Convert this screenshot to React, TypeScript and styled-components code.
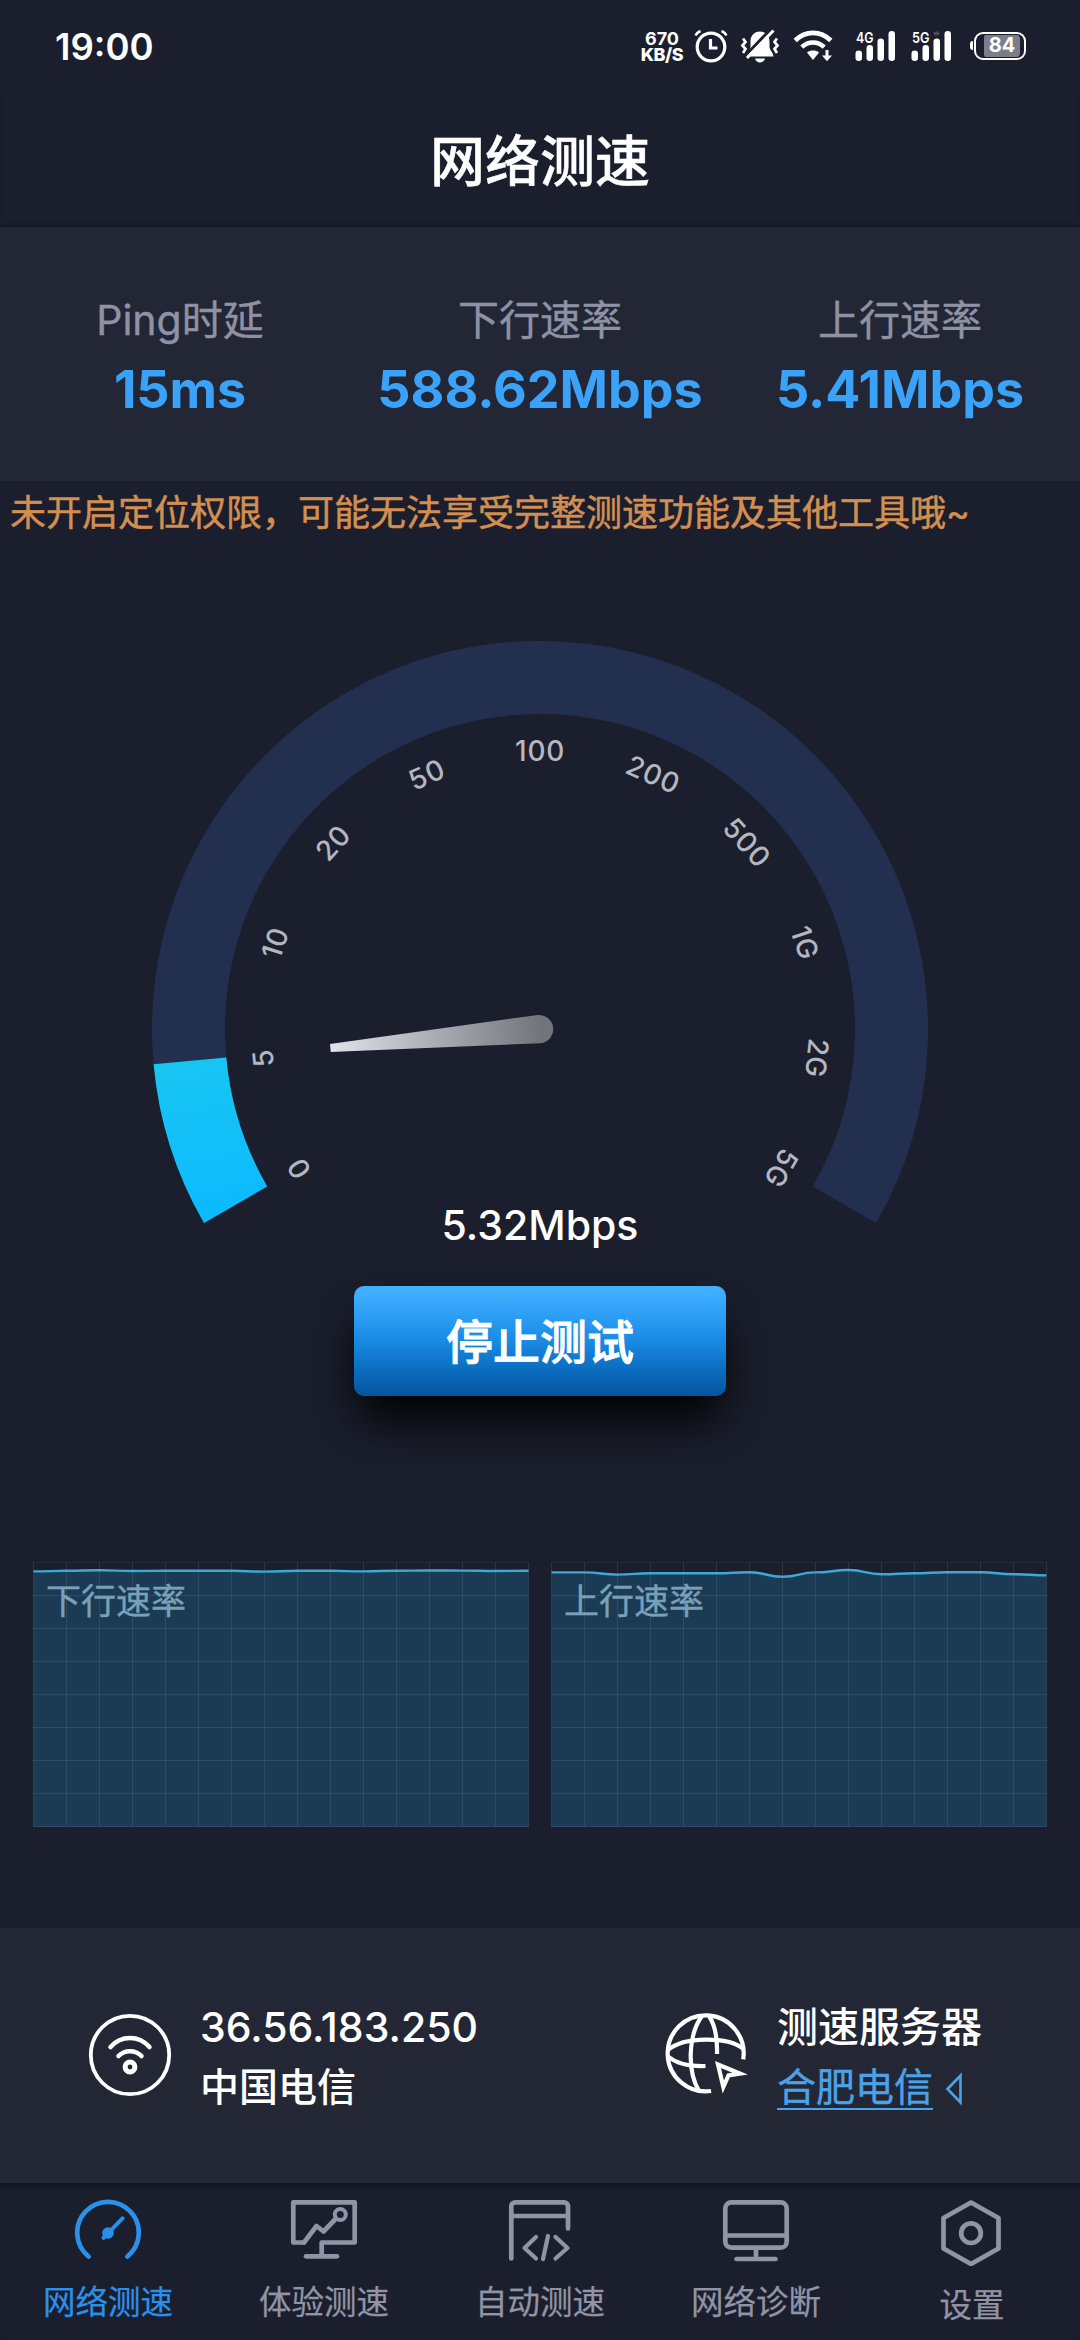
import React from "react";
import styled, { createGlobalStyle } from "styled-components";

const color = {
  bg: "#1b1f2d",
  panel: "#232735",
  muted: "#8f92a4",
  blue: "#3aa3f9",
  tabActive: "#2b90ea",
};

const GlobalStyle = createGlobalStyle`
  * { box-sizing: border-box; }
  body {
    margin: 0;
    background: ${color.bg};
    font-family: Inter, "Noto Sans CJK SC", sans-serif;
    color: #fff;
  }
  svg { display: block; flex: none; }
`;

const Screen = styled.div`
  width: 1080px;
  height: 2340px;
  display: flex;
  flex-direction: column;
  background: ${color.bg};
  overflow: hidden;
`;

/* ---------- status bar ---------- */

const StatusBar = styled.div`
  height: 92px;
  display: flex;
  align-items: center;
  justify-content: space-between;
  padding: 0 54px 0 55px;
`;

const Clock = styled.span`
  font-size: 36.5px;
  font-weight: 600;
  line-height: 44px;
  margin-top: 2px;
`;

const StatusIcons = styled.div`
  display: flex;
  align-items: center;
`;

const NetSpeed = styled.div`
  width: 44px;
  margin-right: 10px;
  font-size: 18px;
  font-weight: 800;
  line-height: 16px;
  letter-spacing: -0.5px;
  text-align: center;
  margin-top: 1px;
`;

const SpeedValue = styled.div`
  font-weight: 650;
  letter-spacing: 0;
`;

const IconSlot = styled.div<{ $gap: number }>`
  margin-right: ${(p) => p.$gap}px;
`;

const Battery = styled.div`
  display: flex;
  align-items: center;
  margin-top: -1px;
`;

const BatteryCap = styled.div`
  width: 3px;
  height: 9px;
  margin-right: 1px;
  border-radius: 3px 0 0 3px;
  background: #fff;
`;

const BatteryBody = styled.div`
  width: 52px;
  height: 28px;
  padding: 1px 4px 1px 8px;
  border: 2.5px solid #fff;
  border-radius: 9px;
`;

const BatteryLevel = styled.div`
  height: 100%;
  border-radius: 2px 4px 4px 2px;
  background: #7b7e8a;
  font-size: 20px;
  font-weight: 700;
  line-height: 21px;
  text-align: center;
`;

/* ---------- header & stats ---------- */

const TitleBar = styled.h1`
  height: 135px;
  margin: 0;
  padding-top: 35px;
  text-align: center;
  font-size: 55px;
  font-weight: 500;
  line-height: 68px;
  -webkit-text-stroke: 0.5px #fff;
  box-shadow: inset 0 -4px 4px -2px rgba(10, 14, 24, 0.45);
`;

const Stats = styled.div`
  height: 254px;
  padding-top: 68px;
  display: grid;
  grid-template-columns: repeat(3, 1fr);
  align-content: start;
  background: ${color.panel};
`;

const Stat = styled.div`
  display: flex;
  flex-direction: column;
  align-items: center;
  gap: 15px;
`;

const StatLabel = styled.div`
  font-size: 41px;
  line-height: 50px;
  color: ${color.muted};
  -webkit-text-stroke: 0.4px ${color.muted};
`;

const StatValue = styled.div`
  font-size: 52px;
  font-weight: 750;
  line-height: 60px;
  color: ${color.blue};
`;

/* ---------- main ---------- */

const Main = styled.main`
  height: 1447px;
  display: flex;
  flex-direction: column;
  align-items: center;
`;

const Notice = styled.div`
  align-self: stretch;
  margin-top: 8px;
  padding-left: 10px;
  font-size: 36px;
  line-height: 49px;
  color: #d38f52;
  -webkit-text-stroke: 0.5px #d38f52;
  white-space: nowrap;
`;

const GaugeSvg = styled.svg`
  margin-top: 103px;
`;

const GaugeText = styled.text`
  font-size: 28px;
  font-weight: 450;
  letter-spacing: 0.7px;
  fill: #b4b6c0;
  text-anchor: middle;
`;

const Reading = styled.div`
  margin-top: -25px;
  font-size: 41px;
  font-weight: 500;
  line-height: 50px;
`;

const StopButton = styled.button`
  width: 372px;
  height: 110px;
  margin-top: 36px;
  padding: 0;
  border: 0;
  border-radius: 10px;
  background: linear-gradient(#44b1ff 0%, #35a6fb 18%, #198ae4 50%, #0b6dbf 76%, #04559d 100%);
  box-shadow: 0 28px 44px -12px rgba(0, 0, 0, 0.95), 0 30px 60px -4px rgba(0, 0, 0, 0.45);
  color: #fff;
  font-family: inherit;
  font-size: 47px;
  font-weight: 500;
  line-height: 112px;
  -webkit-text-stroke: 0.9px #fff;
`;

const Charts = styled.div`
  display: flex;
  gap: 22px;
  margin-top: 165px;
`;

const ChartBox = styled.div`
  display: grid;
  width: 496px;
  height: 268px;
  > * { grid-area: 1 / 1; }
`;

const ChartLabel = styled.div`
  padding: 15px 0 0 13px;
  font-size: 35px;
  line-height: 51px;
  color: #7aa0b9;
  -webkit-text-stroke: 0.4px #7aa0b9;
`;

/* ---------- connection info ---------- */

const InfoPanel = styled.div`
  height: 255px;
  display: grid;
  grid-template-columns: 577px 1fr;
  background: linear-gradient(#232736, #242834);
`;

const InfoItem = styled.div`
  display: flex;
  align-items: flex-start;
  padding: 85px 0 0 88px;
`;

const InfoText = styled.div`
  margin: -12px 0 0 28px;
`;

const InfoMain = styled.div`
  font-size: 41px;
  font-weight: 500;
  line-height: 52px;
`;

const InfoSub = styled.div`
  margin-top: 8px;
  font-size: 39px;
  font-weight: 500;
  line-height: 52px;
`;

const ServerLink = styled.div`
  display: flex;
  align-items: flex-start;
  gap: 12px;
  margin-top: 8px;
  color: #4ba2ea;
`;

const LinkText = styled.span`
  height: 49px;
  border-bottom: 2px solid #4ba2ea;
  font-size: 39px;
  line-height: 52px;
  -webkit-text-stroke: 0.4px #4ba2ea;
`;

/* ---------- tabs ---------- */

const TabBar = styled.nav`
  height: 157px;
  display: grid;
  grid-template-columns: repeat(5, 1fr);
  box-shadow: inset 0 6px 5px -3px rgba(10, 14, 24, 0.55);
`;

const Tab = styled.div<{ $active?: boolean }>`
  display: flex;
  flex-direction: column;
  align-items: center;
  padding-top: 16px;
  color: ${(p) => (p.$active ? color.tabActive : "#9194a5")};
`;

const TabLabel = styled.div`
  margin-top: 18px;
  font-size: 32.5px;
  line-height: 44px;
  -webkit-text-stroke: 0.25px currentColor;
`;

/* ---------- status icons ---------- */

const AlarmIcon = () => (
  <svg width="34" height="34" viewBox="0 0 34 34" fill="none" stroke="#fff" strokeWidth="3.200">
    <circle cx="17" cy="18" r="13.800" />
    <path d="M16.500 10v9h7" />
    <path d="M1.500 6.500A10 10 0 0 1 6.500 2M32.500 6.500A10 10 0 0 0 27.500 2" strokeWidth="2.600" />
  </svg>
);

const MutedBellIcon = () => (
  <svg width="40" height="36" viewBox="0 0 40 36">
    <path
      d="M20 3.500c-6 0-9.500 4.500-9.500 10v5.500c0 3-3.500 5-4 9.500h27c-.5-4.500-4-6.500-4-9.500v-5.500c0-5.500-3.500-10-9.500-10z"
      fill="#fff"
    />
    <path d="M15 30.500h10c-.8 2.700-2.700 4-5 4s-4.200-1.300-5-4z" fill="#fff" />
    <path d="M31.500 .5 5 28" stroke="#1b1f2d" strokeWidth="3" />
    <path d="M33.500 2.500 7 30" stroke="#fff" strokeWidth="3" />
    <path
      d="M3 10.500l2.500 3.500L2.500 17.500l3 3.500-2.500 4M37 10.500l-2.500 3.500 3 3.500-3 3.500 2.500 4"
      fill="none"
      stroke="#fff"
      strokeWidth="2.700"
    />
  </svg>
);

const WifiIcon = () => (
  <svg width="40" height="34" viewBox="0 0 40 34" fill="none" stroke="#fff">
    <path d="M2.200 11.500C12.500 1.300 27.500 1.300 37.800 11.500" strokeWidth="4.800" />
    <path d="M8.800 18.200c6.500-6.300 15.900-6.300 22.400 0" strokeWidth="4.500" />
    <path d="M14 23.500c3.600-2.600 8.400-2.600 12 0L20 31z" fill="#fff" stroke="none" />
    <path d="M34 21v8" strokeWidth="3" />
    <path d="M29 26.500h10l-5 5.800z" fill="#fff" stroke="none" />
  </svg>
);

const SignalIcon = ({ label, faded }: { label: string; faded?: boolean }) => (
  <svg width="41" height="34" viewBox="0 0 41 34" fill="#fff">
    <text x="1" y="13.500" fontSize="15" fontWeight="600" fontFamily="Inter" textLength="17.500" lengthAdjust="spacingAndGlyphs">
      {label}
    </text>
    <rect x="0.500" y="21.500" width="6.500" height="10.500" rx="3.200" />
    <rect x="11.500" y="16" width="6.500" height="16" rx="3.200" />
    <rect x="22.500" y="9.500" width="6.500" height="22.500" rx="3.200" />
    {faded && <rect x="22.500" y="2.500" width="6" height="4" rx="2" fill="#454958" />}
    <rect x="33.500" y="2" width="6.500" height="30" rx="3.200" />
  </svg>
);

/* ---------- gauge ---------- */

const CX = 388;
const CY = 388;
const MID_R = 351.5;
const LABEL_R = 278.5;
const START = 150;
const ticks = ["0", "5", "10", "20", "50", "100", "200", "500", "1G", "2G", "5G"];

const polar = (deg: number, r: number) => {
  const a = (deg * Math.PI) / 180;
  return [CX + r * Math.cos(a), CY + r * Math.sin(a)];
};

const arc = (from: number, to: number) => {
  const [x1, y1] = polar(from, MID_R);
  const [x2, y2] = polar(to, MID_R);
  return `M${x1} ${y1}A${MID_R} ${MID_R} 0 ${to - from > 180 ? 1 : 0} 1 ${x2} ${y2}`;
};

const Gauge = ({ sweep }: { sweep: number }) => (
  <GaugeSvg width="776" height="584" viewBox="0 0 776 584">
    <defs>
      <linearGradient id="progress" gradientUnits="userSpaceOnUse" x1="30" y1="420" x2="60" y2="584">
        <stop offset="0" stopColor="#18c5f2" />
        <stop offset="1" stopColor="#0bbaff" />
      </linearGradient>
      <linearGradient id="needle" gradientUnits="userSpaceOnUse" x1="177" y1="0" x2="390" y2="0">
        <stop offset="0" stopColor="#e2e4ea" />
        <stop offset="1" stopColor="#72747c" />
      </linearGradient>
    </defs>
    <path d={arc(START, START + 240)} fill="none" stroke="#222f4f" strokeWidth="73" />
    <path d={arc(START, START + sweep)} fill="none" stroke="url(#progress)" strokeWidth="73" />
    {ticks.map((t, i) => {
      const turn = -120 + i * 24;
      return (
        <GaugeText key={t} x={CX} y={CY - LABEL_R + 10} transform={`rotate(${turn} ${CX} ${CY})`}>
          {t}
        </GaugeText>
      );
    })}
    <path
      d="M177.500 384 387 373.800A14.200 14.200 0 0 1 387 402.200L177.500 392z"
      fill="url(#needle)"
      transform={`rotate(${START + sweep - 180} ${CX} ${CY})`}
    />
  </GaugeSvg>
);

/* ---------- charts ---------- */

const CELL = 33;

const smooth = (ys: number[]) =>
  ys
    .map((y, i) => {
      const x = 0.5 + i * CELL;
      if (i === 0) return `M${x} ${y}`;
      const mid = x - CELL / 2;
      return `C${mid} ${ys[i - 1]} ${mid} ${y} ${x} ${y}`;
    })
    .join("");

const RateChart = ({ label, values }: { label: string; values: number[] }) => {
  const line = smooth(values);
  return (
    <ChartBox>
      <svg width="496" height="268" viewBox="0 0 496 268">
        <path d={`${line}V266H0.500Z`} fill="#1a3b53" />
        <g stroke="#a8c4dc" strokeOpacity="0.13" strokeWidth="1">
          {Array.from({ length: 16 }, (_, i) => (
            <path key={i} d={`M${i * CELL + 0.5} 1V265`} />
          ))}
          {Array.from({ length: 9 }, (_, i) => (
            <path key={i} d={`M0 ${i * CELL + 1.5}H496`} strokeOpacity={i === 0 ? 0.06 : 0.13} />
          ))}
        </g>
        <path d={line} fill="none" stroke="#3caad8" strokeWidth="2.400" />
      </svg>
      <ChartLabel>{label}</ChartLabel>
    </ChartBox>
  );
};

const downRates = [10.4, 9.8, 9.2, 10, 9.8, 9.8, 9.8, 10.6, 9.8, 9.8, 10.4, 9.7, 9.5, 9.6, 10, 9.8];
const upRates = [11.4, 11.4, 13.6, 12.2, 12.2, 12.2, 11.2, 15.8, 11.4, 9, 13.2, 12.2, 11.2, 11.2, 13.2, 14.4];

/* ---------- info icons ---------- */

const WifiCircleIcon = () => (
  <svg width="84" height="84" viewBox="0 0 84 84" fill="none" stroke="#fff" strokeLinecap="round">
    <circle cx="42" cy="42" r="39.200" strokeWidth="3.800" />
    <path d="M22.500 34C33 22 51 22 61.500 34" strokeWidth="4.500" />
    <path d="M30.500 43c6-6.500 17-6.500 23 0" strokeWidth="4.500" />
    <circle cx="42" cy="54" r="4.900" strokeWidth="5" />
  </svg>
);

const GlobeIcon = () => (
  <svg width="84" height="84" viewBox="0 0 84 84" fill="none" stroke="#fff" strokeWidth="4.200">
    <path d="M78.200 46.300A38 38 0 1 0 46.100 78" />
    <path d="M37 3C23 22 22 58 34 78" />
    <path d="M44 3C50 12 52.500 26 52 41" />
    <path d="M3 37C19 23.500 62 23.500 78 35.500" />
    <path d="M3 43.500C12 51 26 53.500 40.500 53" />
    <path d="M53 51.500 58.300 74 63.500 62.300 75 60.600z" />
  </svg>
);

const TriangleSlot = styled.div`
  margin-top: 11px;
`;

const BackTriangle = () => (
  <svg width="18" height="34" viewBox="0 0 18 34" fill="none" stroke="#4ba2ea" strokeWidth="2.600">
    <path d="M2.500 17 15.500 3.500V30.500z" />
  </svg>
);

/* ---------- tab icons ---------- */

const tabIcon = {
  fill: "none",
  stroke: "currentColor",
  strokeWidth: 4.7,
  strokeLinecap: "round" as const,
  strokeLinejoin: "round" as const,
};

const SpeedTabIcon = () => (
  <svg width="68" height="64" viewBox="0 0 68 64" {...tabIcon}>
    <path d="M14.500 57.500A30.800 30.800 0 1 1 53.500 57.500" />
    <path d="M48.500 19.300 29.500 38.800" strokeWidth="4" />
    <circle cx="34" cy="34" r="5.800" fill="currentColor" stroke="none" />
  </svg>
);

const ExperienceTabIcon = () => (
  <svg width="68" height="64" viewBox="0 0 68 64" {...tabIcon}>
    <path d="M14 43.500H3.300V3.300H64.700V43.500H31.700V57" />
    <path d="M14 43.500 26.500 27 33.500 32.500 46 19.500" />
    <circle cx="50.300" cy="15.500" r="5.500" strokeWidth="4" />
    <path d="M16 57.300H47" />
  </svg>
);

const AutoTabIcon = () => (
  <svg width="68" height="64" viewBox="0 0 68 64" {...tabIcon}>
    <path d="M5.300 59.500V7.300a4 4 0 0 1 4-4H58a4 4 0 0 1 4 4V29.500" />
    <path d="M5.300 17H62" />
    <path d="M30 38 18.500 49 30 59.500M42 37 37 60M49.500 38 61.500 49 49.500 59.500" strokeWidth="4.200" />
  </svg>
);

const DiagnoseTabIcon = () => (
  <svg width="68" height="64" viewBox="0 0 68 64" {...tabIcon}>
    <rect x="3.300" y="3.300" width="61.400" height="45.400" rx="6" />
    <path d="M3.300 36.500H64.700M34 49V59.500M14.500 60H53.500" />
  </svg>
);

const SettingsTabIcon = () => (
  <svg width="68" height="67" viewBox="0 0 68 67" {...tabIcon}>
    <path d="M33 3.500 60.500 19V49.500L33 65 5.500 49.500V19z" />
    <circle cx="33" cy="34.200" r="9.800" />
  </svg>
);

const tabs = [
  { label: "网络测速", Icon: SpeedTabIcon, active: true },
  { label: "体验测速", Icon: ExperienceTabIcon },
  { label: "自动测速", Icon: AutoTabIcon },
  { label: "网络诊断", Icon: DiagnoseTabIcon },
  { label: "设置", Icon: SettingsTabIcon },
];

const stats = [
  { label: "Ping时延", value: "15ms" },
  { label: "下行速率", value: "588.62Mbps" },
  { label: "上行速率", value: "5.41Mbps" },
];

export default function App() {
  return (
    <>
      <GlobalStyle />
      <Screen>
        <StatusBar>
          <Clock>19:00</Clock>
          <StatusIcons>
            <NetSpeed>
              <SpeedValue>670</SpeedValue>
              <div>KB/S</div>
            </NetSpeed>
            <IconSlot $gap={12}><AlarmIcon /></IconSlot>
            <IconSlot $gap={13}><MutedBellIcon /></IconSlot>
            <IconSlot $gap={22}><WifiIcon /></IconSlot>
            <IconSlot $gap={15}><SignalIcon label="4G" /></IconSlot>
            <IconSlot $gap={18}><SignalIcon label="5G" faded /></IconSlot>
            <Battery>
              <BatteryCap />
              <BatteryBody>
                <BatteryLevel>84</BatteryLevel>
              </BatteryBody>
            </Battery>
          </StatusIcons>
        </StatusBar>
        <TitleBar>网络测速</TitleBar>
        <Stats>
          {stats.map((s) => (
            <Stat key={s.label}>
              <StatLabel>{s.label}</StatLabel>
              <StatValue>{s.value}</StatValue>
            </Stat>
          ))}
        </Stats>
        <Main>
          <Notice>未开启定位权限，可能无法享受完整测速功能及其他工具哦~</Notice>
          <Gauge sweep={24.8} />
          <Reading>5.32Mbps</Reading>
          <StopButton>停止测试</StopButton>
          <Charts>
            <RateChart label="下行速率" values={downRates} />
            <RateChart label="上行速率" values={upRates} />
          </Charts>
        </Main>
        <InfoPanel>
          <InfoItem>
            <WifiCircleIcon />
            <InfoText>
              <InfoMain>36.56.183.250</InfoMain>
              <InfoSub>中国电信</InfoSub>
            </InfoText>
          </InfoItem>
          <InfoItem>
            <GlobeIcon />
            <InfoText>
              <InfoMain>测速服务器</InfoMain>
              <ServerLink>
                <LinkText>合肥电信</LinkText>
                <TriangleSlot>
                  <BackTriangle />
                </TriangleSlot>
              </ServerLink>
            </InfoText>
          </InfoItem>
        </InfoPanel>
        <TabBar>
          {tabs.map(({ label, Icon, active }) => (
            <Tab key={label} $active={active}>
              <Icon />
              <TabLabel>{label}</TabLabel>
            </Tab>
          ))}
        </TabBar>
      </Screen>
    </>
  );
}
